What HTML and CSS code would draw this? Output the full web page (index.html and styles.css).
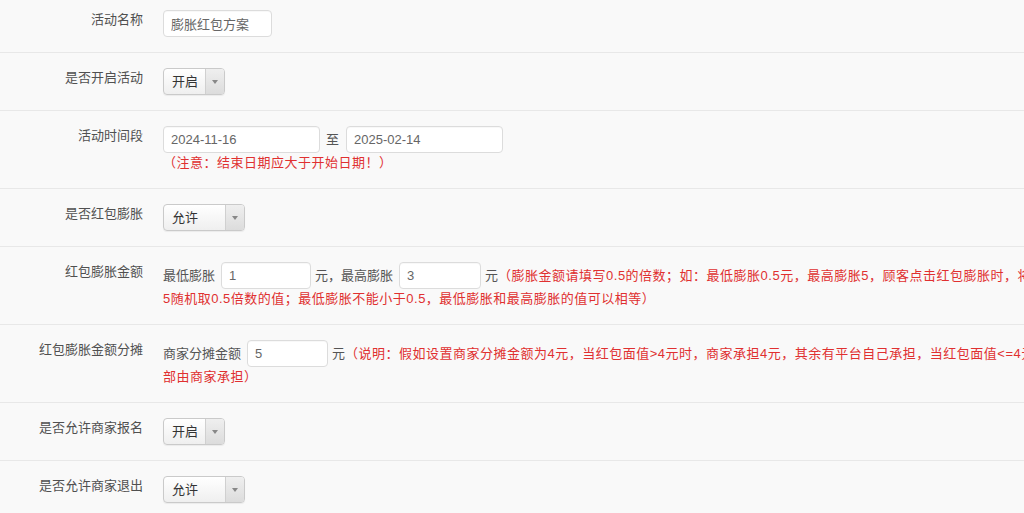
FILE: index.html
```html
<!DOCTYPE html>
<html lang="zh-CN">
<head>
  <meta charset="UTF-8" />
  <title>膨胀红包方案</title>
  <link rel="stylesheet" href="styles.css">
</head>
<body>
  <div class="form">
    <div class="row">
      <label class="label">活动名称</label>
      <div class="ctrl">
        <input type="text" class="ipt first w-name" value="膨胀红包方案" />
      </div>
    </div>

    <div class="row">
      <label class="label">是否开启活动</label>
      <div class="ctrl">
        <div class="select sm"><span class="val">开启</span><span class="arrow"></span></div>
      </div>
    </div>

    <div class="row">
      <label class="label">活动时间段</label>
      <div class="ctrl">
        <div class="line">
          <input type="text" class="ipt first w-date" value="2024-11-16" />
          <span class="to">至</span>
          <input type="text" class="ipt w-date" value="2025-02-14" />
        </div>
        <div class="tip">（注意：结束日期应大于开始日期！）</div>
      </div>
    </div>

    <div class="row">
      <label class="label">是否红包膨胀</label>
      <div class="ctrl">
        <div class="select md"><span class="val">允许</span><span class="arrow"></span></div>
      </div>
    </div>

    <div class="row">
      <label class="label">红包膨胀金额</label>
      <div class="ctrl">
        <div class="line">
          最低膨胀<input type="text" class="ipt w-min" value="1" />元，最高膨胀<input type="text" class="ipt w-max" value="3" />元<span class="tip">（膨胀金额请填写0.5的倍数；如：最低膨胀0.5元，最高膨胀5，顾客点击红包膨胀时，将在0.5-</span>
        </div>
        <div class="tip">5随机取0.5倍数的值；最低膨胀不能小于0.5，最低膨胀和最高膨胀的值可以相等）</div>
      </div>
    </div>

    <div class="row">
      <label class="label">红包膨胀金额分摊</label>
      <div class="ctrl">
        <div class="line">
          商家分摊金额<input type="text" class="ipt w-share" value="5" />元<span class="tip">（说明：假如设置商家分摊金额为4元，当红包面值&gt;4元时，商家承担4元，其余有平台自己承担，当红包面值&lt;=4元时，全</span>
        </div>
        <div class="tip">部由商家承担）</div>
      </div>
    </div>

    <div class="row">
      <label class="label">是否允许商家报名</label>
      <div class="ctrl">
        <div class="select sm"><span class="val">开启</span><span class="arrow"></span></div>
      </div>
    </div>

    <div class="row">
      <label class="label">是否允许商家退出</label>
      <div class="ctrl">
        <div class="select md"><span class="val">允许</span><span class="arrow"></span></div>
      </div>
    </div>
  </div>
</body>
</html>
```

FILE: styles.css
```css
html, body {
  margin: 0;
  overflow: hidden;
}

body {
  font-family: 'Liberation Sans', 'Noto Sans CJK SC', sans-serif;
  font-size: 13px;
  color: #333;
  background: #f9f9f9;
}

.form {
  width: 1300px;
  margin-top: -5px;
}

.row {
  display: flex;
  padding: 15px 0;
  border-bottom: 1px solid #e8e8e8;
}

.label {
  width: 143px;
  padding-right: 20px;
  text-align: right;
  line-height: 20px;
  color: #505050;
}

.ctrl {
  flex: 1;
  line-height: 20px;
}

.line {
  display: flex;
  align-items: center;
  height: 27px;
  white-space: nowrap;
  color: #555;
}

.ipt {
  box-sizing: border-box;
  height: 27px;
  margin: 0 4px 0 6px;
  padding: 0 7px;
  border: 1px solid #dcdcdc;
  border-radius: 4px;
  background: #fff;
  font-family: inherit;
  font-size: 13px;
  color: #666;
  box-shadow: inset 0 1px 1px rgba(0, 0, 0, 0.03);
}

.ipt.first {
  margin-left: 0;
}

.w-name { width: 109px; }
.w-date { width: 157px; }
.w-min { width: 90px; }
.w-max { width: 82px; }
.w-share { width: 81px; }

.to {
  margin: 0 1px 0 2px;
  color: #555;
}

.tip {
  color: #e03030;
  white-space: nowrap;
  letter-spacing: 0.5px;
}

.select {
  box-sizing: border-box;
  display: flex;
  height: 27px;
  border: 1px solid #cacaca;
  border-radius: 4px;
  background: linear-gradient(#ffffff, #efefef);
  box-shadow: 0 1px 1px rgba(0, 0, 0, 0.06);
  overflow: hidden;
}

.select.sm { width: 62px; }
.select.md { width: 82px; }

.select .val {
  flex: 1;
  padding-left: 8px;
  line-height: 25px;
  color: #333;
}

.select .arrow {
  position: relative;
  width: 18px;
  border-left: 1px solid #d0d0d0;
  background: linear-gradient(#efefef, #dcdcdc);
}

.select .arrow::after {
  content: "";
  position: absolute;
  left: 6px;
  top: 11px;
  border-left: 3px solid transparent;
  border-right: 3px solid transparent;
  border-top: 4px solid #888;
}
```
